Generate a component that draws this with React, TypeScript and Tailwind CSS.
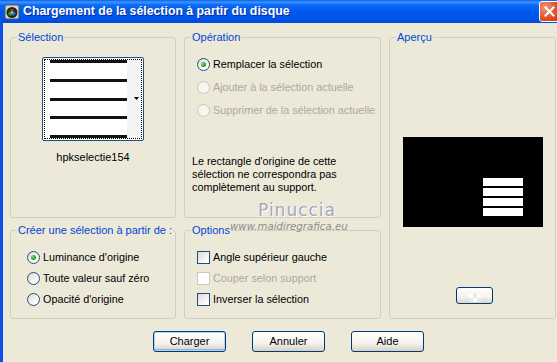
import React from "react";

const F = { fontFamily: '"Liberation Sans", Arial, sans-serif' };

function Radio({ checked, disabled }: { checked?: boolean; disabled?: boolean }) {
  return (
    <span
      className={
        "flex h-[13px] w-[13px] shrink-0 items-center justify-center rounded-full border " +
        (disabled
          ? "border-[#CAC8BB] bg-[#F6F5F0]"
          : "border-[#1C5180] bg-[linear-gradient(135deg,#DCD9CF,#FFFFFF_80%)]")
      }
    >
      {checked && (
        <span className="h-[5px] w-[5px] rounded-full bg-[radial-gradient(circle_at_35%_35%,#7BE07B,#21A121_60%,#1A8A1A)]" />
      )}
    </span>
  );
}

function Check({ disabled }: { disabled?: boolean }) {
  return (
    <span
      className={
        "block h-[13px] w-[13px] shrink-0 border " +
        (disabled
          ? "border-[#CAC8BB] bg-white"
          : "border-[#1C5180] bg-[linear-gradient(135deg,#DCDAD5,#FFFFFF_85%)]")
      }
    />
  );
}

function Row({
  control,
  label,
  disabled,
}: {
  control: React.ReactNode;
  label: string;
  disabled?: boolean;
}) {
  return (
    <div className="flex h-[13px] items-center gap-[3px]">
      {control}
      <span className={disabled ? "text-[#ACA899]" : "text-black"}>{label}</span>
    </div>
  );
}

function Group({
  title,
  className,
  children,
}: {
  title: string;
  className: string;
  children?: React.ReactNode;
}) {
  return (
    <fieldset className={"rounded-[3px] border border-[#D0D0BF] " + className}>
      <legend className="ml-[6px] px-[1px] text-[11px] leading-[13px] text-[#0046D5]">{title}</legend>
      {children}
    </fieldset>
  );
}

function Btn({ label, def }: { label: string; def?: boolean }) {
  return (
    <button
      className={
        "flex h-[21px] w-[73px] items-center justify-center rounded-[3px] border border-[#003C74] bg-[linear-gradient(#FFFFFF,#F3F2EC_60%,#D6D0C5)] text-[11px] text-black " +
        (def ? "shadow-[inset_0_0_0_1px_#B9D1F4,inset_0_-1px_0_1px_#8DB2E3]" : "")
      }
    >
      {label}
    </button>
  );
}

export default function App() {
  return (
    <div className="flex h-[362px] w-[557px] flex-col overflow-hidden bg-[#ECE9D8]" style={F}>
      {/* Title bar */}
      <div className="flex h-[23px] shrink-0 items-center bg-[linear-gradient(#0A5DE8_0%,#3E96FF_9%,#0A6AF6_22%,#0058EE_50%,#0055E8_80%,#0049D6_100%)] pl-[4px]">
        <svg width="16" height="16" viewBox="0 0 16 16" className="shrink-0">
          <rect x="1" y="1" width="14" height="14" rx="2" fill="#D8D8D8" stroke="#555" />
          <circle cx="8" cy="8.5" r="5.5" fill="#222" />
          <circle cx="6.5" cy="9.5" r="2.2" fill="#1BA33A" />
          <circle cx="9.5" cy="9.5" r="2" fill="#2D6FE0" />
          <circle cx="8" cy="6.5" r="1.8" fill="#C0392B" />
          <circle cx="8" cy="8.5" r="1" fill="#F5E050" />
        </svg>
        <span className="ml-[3px] text-[12.3px] font-bold text-white [text-shadow:1px_1px_0_#0A2A9C]">
          Chargement de la sélection à partir du disque
        </span>
        <div className="ml-auto mr-[-3px] flex h-[21px] w-[21px] items-center justify-center rounded-[3px] border border-white bg-[radial-gradient(circle_at_30%_30%,#F0977A,#E0522A_55%,#C03A16)]">
          <svg width="11" height="11" viewBox="0 0 11 11">
            <path d="M1.5 1.5 L9.5 9.5 M9.5 1.5 L1.5 9.5" stroke="white" strokeWidth="2" strokeLinecap="square" />
          </svg>
        </div>
      </div>

      {/* Body */}
      <div className="relative flex flex-1 border-l-[3px] border-[#0A4FE8]">
        <div className="flex flex-col pl-[7px] pt-[8px] text-[10.8px]">
          <div className="grid grid-cols-[166px_197px_167px] grid-rows-[187px_95px] gap-x-[8px] gap-y-[6px]">
            {/* Sélection */}
            <Group title="Sélection" className="flex flex-col items-center">
              <div className="relative mt-[13px] h-[84px] w-[102px] rounded-[2px] border border-[#1E4C84] bg-white">
                <div className="m-[1px] flex h-[80px] border border-dotted border-black">
                  <div className="ml-[5px] flex w-[79px] flex-col justify-between">
                    <div className="h-[3px] bg-[#111]" />
                    <div className="h-[3px] bg-[#111]" />
                    <div className="h-[3px] bg-[#111]" />
                    <div className="h-[3px] bg-[#111]" />
                    <div className="h-[3px] bg-[#111]" />
                  </div>
                  <div className="ml-auto h-full w-[14px] bg-[#F4F4F2]" />
                </div>
                <svg width="5" height="3" viewBox="0 0 5 3" className="absolute right-[4px] top-[39px]">
                  <path d="M0 0 H5 L2.5 3 Z" fill="#000" />
                </svg>
              </div>
              <div className="mt-[10px] text-[11px] leading-[13px] text-black">hpkselectie154</div>
            </Group>

            {/* Opération */}
            <Group title="Opération" className="flex flex-col">
              <div className="ml-[12px] mt-[14px] flex flex-col gap-[10px]">
                <Row control={<Radio checked />} label="Remplacer la sélection" />
                <Row control={<Radio disabled />} label="Ajouter à la sélection actuelle" disabled />
                <Row control={<Radio disabled />} label="Supprimer de la sélection actuelle" disabled />
              </div>
              <p className="ml-[7px] mt-[38px] w-[180px] leading-[13px] text-black">
                Le rectangle d'origine de cette sélection ne correspondra pas complètement au support.
              </p>
            </Group>

            {/* Aperçu */}
            <Group title="Aperçu" className="row-span-2 flex flex-col">
              <div className="ml-[13px] mt-[93px] flex h-[90px] w-[140px] bg-black">
                <div className="ml-[80px] mt-[41px] flex w-[40px] flex-col gap-[2px]">
                  <div className="h-[8px] bg-white" />
                  <div className="h-[8px] bg-white" />
                  <div className="h-[8px] bg-white" />
                  <div className="h-[8px] bg-white" />
                </div>
              </div>
              <div className="ml-[66px] mt-[60px] flex h-[17px] w-[37px] items-end justify-center rounded-[3px] border border-[#003C74] bg-[linear-gradient(#FFFFFF,#F3F2EC_60%,#DCD7CC)]">
                <div className="mb-[1px] grid grid-cols-3">
                  <span className="h-[4px] w-[4px] bg-white" />
                  <span className="h-[4px] w-[4px] bg-[#E8E8E8]" />
                  <span className="h-[4px] w-[4px] bg-white" />
                  <span className="h-[4px] w-[4px] bg-[#E8E8E8]" />
                  <span className="h-[4px] w-[4px] bg-white" />
                  <span className="h-[4px] w-[4px] bg-[#E8E8E8]" />
                </div>
              </div>
            </Group>

            {/* Créer */}
            <Group title="Créer une sélection à partir de :" className="flex flex-col">
              <div className="ml-[16px] mt-[14px] flex flex-col gap-[8px]">
                <Row control={<Radio checked />} label="Luminance d'origine" />
                <Row control={<Radio />} label="Toute valeur sauf zéro" />
                <Row control={<Radio />} label="Opacité d'origine" />
              </div>
            </Group>

            {/* Options */}
            <Group title="Options" className="flex flex-col">
              <div className="ml-[12px] mt-[14px] flex flex-col gap-[8px]">
                <Row control={<Check />} label="Angle supérieur gauche" />
                <Row control={<Check disabled />} label="Couper selon support" disabled />
                <Row control={<Check />} label="Inverser la sélection" />
              </div>
            </Group>
          </div>

          <div className="ml-[143px] mt-[12px] flex gap-[26px]">
            <Btn label="Charger" def />
            <Btn label="Annuler" />
            <Btn label="Aide" />
          </div>
        </div>

        {/* watermark */}
        <div className="pointer-events-none absolute left-[227px] top-[177px] flex flex-col items-start">
          <span
            className="ml-[28px] text-[17px] leading-[20px] tracking-[1px] text-[#A4A7C2] [text-shadow:1px_1px_0_#ffffff]"
            style={{ fontFamily: '"DejaVu Sans", sans-serif' }}
          >
            Pinuccia
          </span>
          <span
            className="text-[10.2px] italic leading-[14px] text-[#8E8E8E]"
            style={{ fontFamily: '"DejaVu Sans", sans-serif' }}
          >
            www.maidiregrafica.eu
          </span>
        </div>
      </div>
    </div>
  );
}
